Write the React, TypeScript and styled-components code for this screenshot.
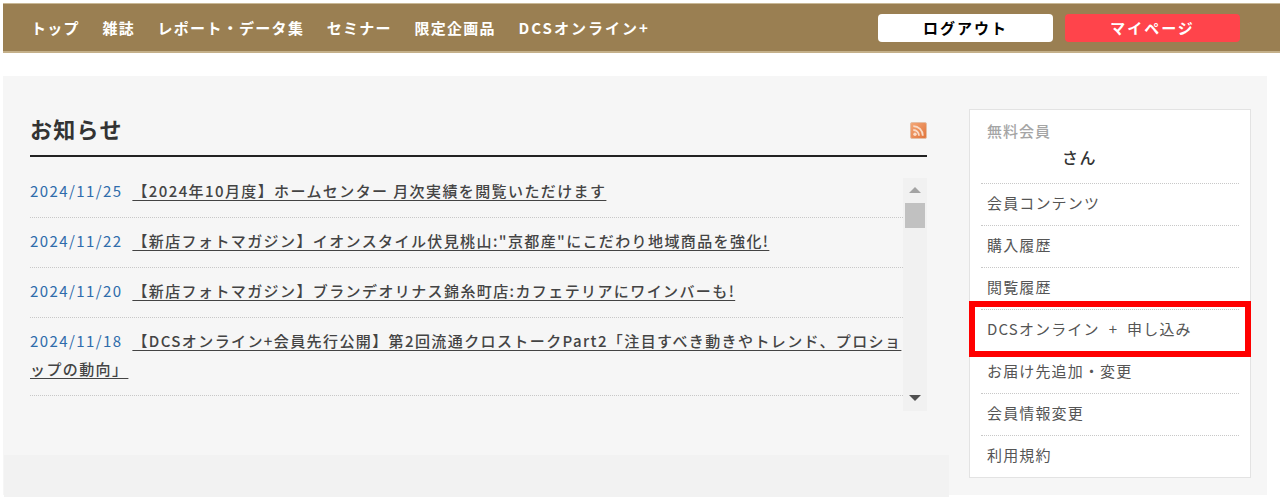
import styled, { createGlobalStyle } from "styled-components";

const GlobalStyle = createGlobalStyle`
  html, body {
    margin: 0;
    padding: 0;
    background: #fff;
    font-family: "Noto Sans CJK JP", "Liberation Sans", sans-serif;
    color: #333;
    overflow: hidden;
  }
  * {
    box-sizing: border-box;
  }
`;

const Page = styled.div`
  width: 1280px;
  height: 498px;
  padding: 3px 0 0 3px;
  overflow: hidden;
`;

const Header = styled.header`
  height: 50px;
  background: #9a7f52;
  border-top: 1px solid #c9b896;
  border-bottom: 2px solid #c4b08a;
  display: flex;
  align-items: center;
  justify-content: space-between;
  padding: 0 40px 0 28px;
`;

const Nav = styled.nav`
  display: flex;
  gap: 22.5px;
`;

const NavLink = styled.a<{ $wide?: boolean }>`
  font-size: 15px;
  font-weight: 700;
  letter-spacing: ${(p) => (p.$wide ? "2px" : "1.3px")};
  color: #fff;
  white-space: nowrap;
`;

const Actions = styled.div`
  display: flex;
  gap: 12px;
`;

const ActionButton = styled.button<{ $primary?: boolean }>`
  width: 175px;
  height: 28px;
  border: 0;
  border-radius: 4px;
  padding: 0;
  font-family: inherit;
  font-size: 15px;
  font-weight: 700;
  letter-spacing: 2px;
  background: ${(p) => (p.$primary ? "#ff444b" : "#fff")};
  color: ${(p) => (p.$primary ? "#fff" : "#000")};
`;

const Main = styled.main`
  margin-top: 23px;
  width: 1264px;
  height: 419px;
  background: #f6f6f6;
  display: flex;
  align-items: flex-start;
`;

const Column = styled.div`
  width: 946px;
  height: 421px;
  display: flex;
  flex-direction: column;
`;

const Content = styled.section`
  flex: 1;
  padding: 33px 22px 0 27px;
`;

const Band = styled.div`
  height: 42px;
  margin-left: 1px;
  background: #f2f2f2;
`;

const TitleBar = styled.div`
  height: 48px;
  border-bottom: 2px solid #222;
  display: flex;
  align-items: flex-start;
  justify-content: space-between;
`;

const Title = styled.h2`
  margin: -2px 0 0;
  font-size: 22px;
  line-height: 42px;
  font-weight: 700;
  letter-spacing: 1.3px;
  color: #333;
`;

const RssIcon = styled.svg`
  width: 17px;
  height: 17px;
  margin: 13px 0 0 0;
`;

const NewsWrap = styled.div`
  display: flex;
  margin-top: 21px;
  height: 233px;
`;

const NewsList = styled.ul`
  flex: 1;
  min-width: 0;
  margin: -10px 0 0;
  padding: 0;
  list-style: none;
`;

const NewsItem = styled.li`
  padding: 9px 0 12px;
  border-bottom: 1px dotted #c8c8c8;
  font-size: 15px;
  line-height: 28px;
  letter-spacing: 1.4px;
`;

const NewsDate = styled.span`
  color: #2f6cab;
  margin-right: 10px;
`;

const NewsLink = styled.a`
  color: #444;
  font-weight: 500;
  text-decoration: underline;
  text-underline-offset: 3px;
`;

const Scrollbar = styled.div`
  width: 24px;
  background: #f1f1f1;
  display: flex;
  flex-direction: column;
  align-items: center;
  justify-content: space-between;
  padding: 9px 0 10px;
`;

const ScrollTop = styled.div`
  display: flex;
  flex-direction: column;
  align-items: center;
  gap: 10px;
`;

const Arrow = styled.div<{ $down?: boolean }>`
  width: 0;
  height: 0;
  border-left: 6px solid transparent;
  border-right: 6px solid transparent;
  ${(p) =>
    p.$down ? "border-top: 6px solid #505050;" : "border-bottom: 6px solid #a3a3a3;"}
`;

const Thumb = styled.div`
  width: 20px;
  height: 25px;
  background: #c1c1c1;
`;

const Sidebar = styled.aside`
  width: 282px;
  height: 369px;
  margin: 33px 0 0 20px;
  background: #fff;
  border: 1px solid #e3e3e3;
  padding: 0 11px;
`;

const MemberBox = styled.div`
  height: 74px;
  padding: 10px 6px 0;
  border-bottom: 1px dotted #c8c8c8;
`;

const MemberRank = styled.div`
  font-size: 15px;
  line-height: 22px;
  font-weight: 500;
  letter-spacing: 1px;
  color: #a5a5a5;
`;

const MemberName = styled.div`
  font-size: 16px;
  line-height: 30px;
  font-weight: 500;
  letter-spacing: 1.5px;
  padding-left: 75px;
  color: #333;
`;

const MenuItem = styled.a<{ $last?: boolean }>`
  position: relative;
  display: block;
  height: 42px;
  padding-left: 6px;
  font-size: 15px;
  line-height: 38px;
  letter-spacing: 1.15px;
  word-spacing: 4.5px;
  color: #555;
  border-bottom: ${(p) => (p.$last ? "0" : "1px dotted #c8c8c8")};
`;

/* red annotation drawn on top of the screenshot */
const Highlight = styled.span`
  position: absolute;
  top: -9px;
  bottom: -6px;
  left: -12px;
  right: -12px;
  border: 6px solid #ff0000;
  pointer-events: none;
`;

const navItems = ["トップ", "雑誌", "レポート・データ集", "セミナー", "限定企画品", "DCSオンライン+"];

const news = [
  { date: "2024/11/25", title: "【2024年10月度】ホームセンター 月次実績を閲覧いただけます" },
  { date: "2024/11/22", title: '【新店フォトマガジン】イオンスタイル伏見桃山:"京都産"にこだわり地域商品を強化!' },
  { date: "2024/11/20", title: "【新店フォトマガジン】ブランデオリナス錦糸町店:カフェテリアにワインバーも!" },
  {
    date: "2024/11/18",
    title: "【DCSオンライン+会員先行公開】第2回流通クロストークPart2「注目すべき動きやトレンド、プロショップの動向」",
  },
];

const menu = ["会員コンテンツ", "購入履歴", "閲覧履歴", "DCSオンライン + 申し込み", "お届け先追加・変更", "会員情報変更", "利用規約"];

export default function App() {
  return (
    <Page>
      <GlobalStyle />
      <Header>
        <Nav>
          {navItems.map((item) => (
            <NavLink key={item} $wide={item.startsWith("DCS")}>
              {item}
            </NavLink>
          ))}
        </Nav>
        <Actions>
          <ActionButton type="button">ログアウト</ActionButton>
          <ActionButton type="button" $primary>
            マイページ
          </ActionButton>
        </Actions>
      </Header>
      <Main>
        <Column>
          <Content>
            <TitleBar>
              <Title>お知らせ</Title>
              <RssIcon viewBox="0 0 17 17">
                <defs>
                  <linearGradient id="rssFill" x1="0" y1="0" x2="1" y2="1">
                    <stop offset="0" stopColor="#f4a878" />
                    <stop offset="1" stopColor="#e0733a" />
                  </linearGradient>
                </defs>
                <rect x="0.5" y="0.5" width="16" height="16" rx="1.5" fill="url(#rssFill)" stroke="#e4bfa6" />
                <circle cx="5" cy="12.3" r="1.7" fill="#f9dcc8" />
                <path d="M3.3 8a5.7 5.7 0 0 1 5.7 5.7" fill="none" stroke="#f9dcc8" strokeWidth="1.8" />
                <path d="M3.3 4.2a9.5 9.5 0 0 1 9.5 9.5" fill="none" stroke="#f9dcc8" strokeWidth="1.8" />
              </RssIcon>
            </TitleBar>
            <NewsWrap>
              <NewsList>
                {news.map((n) => (
                  <NewsItem key={n.date}>
                    <NewsDate>{n.date}</NewsDate>
                    <NewsLink>{n.title}</NewsLink>
                  </NewsItem>
                ))}
              </NewsList>
              <Scrollbar>
                <ScrollTop>
                  <Arrow />
                  <Thumb />
                </ScrollTop>
                <Arrow $down />
              </Scrollbar>
            </NewsWrap>
          </Content>
          <Band />
        </Column>
        <Sidebar>
          <MemberBox>
            <MemberRank>無料会員</MemberRank>
            <MemberName>さん</MemberName>
          </MemberBox>
          {menu.map((item, i) => (
            <MenuItem key={item} $last={i === menu.length - 1}>
              {item}
              {item.startsWith("DCS") && <Highlight />}
            </MenuItem>
          ))}
        </Sidebar>
      </Main>
    </Page>
  );
}
